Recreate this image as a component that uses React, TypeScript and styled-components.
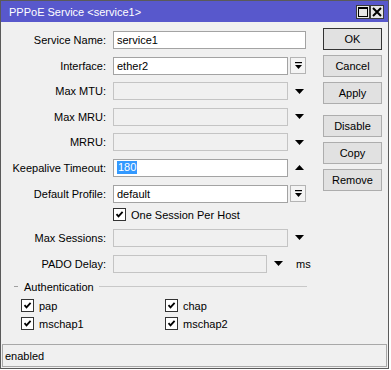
import styled, { createGlobalStyle } from "styled-components";

const GlobalStyle = createGlobalStyle`
  body {
    margin: 0;
    background: #ffffff;
    font-family: "Liberation Sans", Arial, sans-serif;
    font-size: 11px;
    color: #000;
  }
`;

type Field =
  | { kind: "text"; label: string; value?: string; disabled?: boolean; suffix?: "dropdown" | "down" | "up"; selected?: boolean; unit?: string }
  | { kind: "check"; label: string };

const FIELDS: Field[] = [
  { kind: "text", label: "Service Name:", value: "service1" },
  { kind: "text", label: "Interface:", value: "ether2", suffix: "dropdown" },
  { kind: "text", label: "Max MTU:", disabled: true, suffix: "down" },
  { kind: "text", label: "Max MRU:", disabled: true, suffix: "down" },
  { kind: "text", label: "MRRU:", disabled: true, suffix: "down" },
  { kind: "text", label: "Keepalive Timeout:", value: "180", suffix: "up", selected: true },
  { kind: "text", label: "Default Profile:", value: "default", suffix: "dropdown" },
  { kind: "check", label: "One Session Per Host" },
  { kind: "text", label: "Max Sessions:", disabled: true, suffix: "down" },
  { kind: "text", label: "PADO Delay:", disabled: true, suffix: "down", unit: "ms" },
];

const BUTTONS = [["OK", "Cancel", "Apply"], ["Disable", "Copy", "Remove"]];

const AUTH = ["pap", "chap", "mschap1", "mschap2"];

const CheckIcon = () => (
  <CheckBox>
    <svg width="11" height="11" viewBox="0 0 11 11">
      <path d="M2.5 5.2 L4.5 7.4 L8.6 2.8" fill="none" stroke="#000" strokeWidth="1.8" />
    </svg>
  </CheckBox>
);

const DropdownButton = () => (
  <DropBox>
    <svg width="9" height="8" viewBox="0 0 9 8">
      <rect x="1" y="0" width="7" height="1.2" fill="#000" />
      <path d="M1 3 H8 L4.5 7 Z" fill="#000" />
    </svg>
  </DropBox>
);

const Triangle = ({ up }: { up?: boolean }) => (
  <Arrow>
    <svg width="9" height="5" viewBox="0 0 9 5">
      <path d={up ? "M0 5 H9 L4.5 0 Z" : "M0 0 H9 L4.5 5 Z"} fill="#000" />
    </svg>
  </Arrow>
);

export default function App() {
  return (
    <>
      <GlobalStyle />
      <Window>
        <TitleBar>
          <span>PPPoE Service &lt;service1&gt;</span>
          <TitleButtons>
            <TitleButton>
              <svg width="10" height="10" viewBox="0 0 10 10">
                <rect x="0.5" y="0.5" width="9" height="9" fill="none" stroke="#000" />
                <rect x="0" y="0" width="10" height="2" fill="#000" />
              </svg>
            </TitleButton>
            <TitleButton>
              <svg width="10" height="10" viewBox="0 0 10 10">
                <path d="M1 1 L9 9 M9 1 L1 9" stroke="#000" strokeWidth="2" />
              </svg>
            </TitleButton>
          </TitleButtons>
        </TitleBar>

        <Content>
          <FormColumn>
            {FIELDS.map((f) =>
              f.kind === "check" ? (
                <CheckRow key={f.label}>
                  <span />
                  <CheckLabel>
                    <CheckIcon />
                    {f.label}
                  </CheckLabel>
                </CheckRow>
              ) : (
                <Row key={f.label}>
                  <Label>{f.label}</Label>
                  <FieldCell>
                    <Input $disabled={f.disabled} $short={!!f.unit} $full={!f.suffix}>
                      {f.selected ? <Selected>{f.value}</Selected> : f.value}
                    </Input>
                    {f.suffix === "dropdown" && <DropdownButton />}
                    {f.suffix === "down" && <Triangle />}
                    {f.suffix === "up" && <Triangle up />}
                    {f.unit && <Unit>{f.unit}</Unit>}
                  </FieldCell>
                </Row>
              )
            )}

            <Group>
              <GroupHeader>
                <Dash />
                <GroupTitle>Authentication</GroupTitle>
                <GroupLine />
              </GroupHeader>
              <AuthGrid>
                {AUTH.map((a) => (
                  <CheckLabel key={a}>
                    <CheckIcon />
                    {a}
                  </CheckLabel>
                ))}
              </AuthGrid>
            </Group>
          </FormColumn>

          <ButtonColumn>
            {BUTTONS.map((group, i) => (
              <ButtonGroup key={i}>
                {group.map((b) => (
                  <Button key={b} $primary={b === "OK"}>
                    {b}
                  </Button>
                ))}
              </ButtonGroup>
            ))}
          </ButtonColumn>
        </Content>

        <StatusBar>enabled</StatusBar>
      </Window>
    </>
  );
}

const Window = styled.div`
  width: 389px;
  height: 369px;
  box-sizing: border-box;
  border: 1px solid #5a5a5a;
  background: #f0f0f0;
  display: flex;
  flex-direction: column;
`;

const TitleBar = styled.div`
  height: 21px;
  flex-shrink: 0;
  background: #5858cc;
  color: #ffffff;
  display: flex;
  align-items: center;
  justify-content: space-between;
  padding: 0 4px 0 8px;
  font-size: 11px;
`;

const TitleButtons = styled.div`
  display: flex;
  gap: 0;
`;

const TitleButton = styled.div`
  width: 14px;
  height: 14px;
  box-sizing: border-box;
  border: 1px solid #3a3a3a;
  background: #e6e6e6;
  display: flex;
  align-items: center;
  justify-content: center;
`;

const Content = styled.div`
  display: flex;
  padding-top: 6px;
`;

const FormColumn = styled.div`
  width: 306px;
  padding-top: 3px;
  display: flex;
  flex-direction: column;
  gap: 7.6px;
`;

const Row = styled.div`
  display: grid;
  grid-template-columns: 105px 1fr;
  column-gap: 7px;
  align-items: center;
  height: 18px;
`;

const CheckRow = styled(Row)`
  margin: -4.2px 0 -2.6px;
`;

const Label = styled.div`
  text-align: right;
  white-space: nowrap;
`;

const FieldCell = styled.div`
  display: flex;
  align-items: center;
  height: 18px;
`;

const Input = styled.div<{ $disabled?: boolean; $short?: boolean; $full?: boolean }>`
  box-sizing: border-box;
  height: 18px;
  width: ${(p) => (p.$full ? "193px" : p.$short ? "154px" : "175px")};
  border: 1px solid ${(p) => (p.$disabled ? "#c4c4c4" : "#a3a3a3")};
  background: ${(p) => (p.$disabled ? "#f0f0f0" : "#ffffff")};
  padding-left: 3px;
  display: flex;
  align-items: center;
  white-space: nowrap;
`;

const Selected = styled.span`
  background: #3399ff;
  color: #ffffff;
  padding: 0 1px;
  line-height: 13px;
`;

const DropBox = styled.div`
  box-sizing: border-box;
  width: 16px;
  height: 17px;
  margin-left: 2px;
  border: 1px solid #b4b4b4;
  background: #f4f4f4;
  display: flex;
  align-items: center;
  justify-content: center;
`;

const Arrow = styled.div`
  width: 18px;
  display: flex;
  justify-content: center;
  margin-left: 2px;
`;

const Unit = styled.span`
  margin-left: 9px;
`;

const CheckLabel = styled.label`
  display: flex;
  align-items: center;
  gap: 5px;
  white-space: nowrap;
`;

const CheckBox = styled.span`
  box-sizing: border-box;
  width: 13px;
  height: 13px;
  border: 1px solid #333333;
  background: #ffffff;
  display: inline-flex;
  align-items: center;
  justify-content: center;
`;

const Group = styled.div`
  margin-top: 0.8px;
  display: flex;
  flex-direction: column;
`;

const GroupHeader = styled.div`
  display: flex;
  align-items: center;
  height: 12px;
`;

const Dash = styled.span`
  width: 4px;
  height: 1px;
  background: #a0a0a0;
  margin-left: 13px;
`;

const GroupTitle = styled.span`
  padding: 0 5px 0 6px;
`;

const GroupLine = styled.span`
  flex: 1;
  height: 1px;
  background: #c8c8c8;
`;

const AuthGrid = styled.div`
  display: grid;
  grid-template-columns: 144px 1fr;
  grid-auto-rows: 14px;
  row-gap: 4px;
  padding: 6px 0 0 20px;
`;

const ButtonColumn = styled.div`
  margin-left: 16px;
  display: flex;
  flex-direction: column;
  gap: 11px;
`;

const ButtonGroup = styled.div`
  display: flex;
  flex-direction: column;
  gap: 5px;
`;

const Button = styled.button<{ $primary?: boolean }>`
  box-sizing: border-box;
  width: 59px;
  height: 22px;
  padding: 0;
  font-family: "Liberation Sans", Arial, sans-serif;
  font-size: 11px;
  color: #000;
  background: #e1e1e1;
  border: 1px solid ${(p) => (p.$primary ? "#333333" : "#adadad")};
`;

const StatusBar = styled.div`
  margin: auto 1px 1px 1px;
  height: 23px;
  box-sizing: border-box;
  border: 1px solid #a8a8a8;
  padding-left: 2px;
  display: flex;
  align-items: center;
`;
